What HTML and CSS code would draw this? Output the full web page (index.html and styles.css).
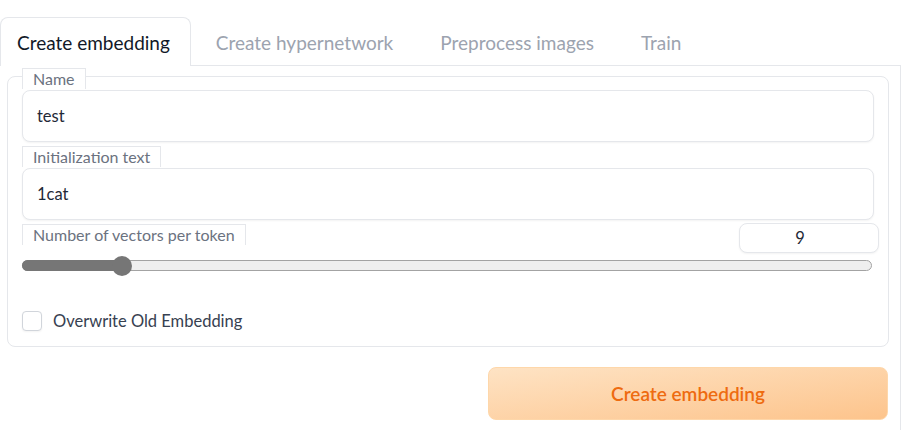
FILE: index.html
```html
<!DOCTYPE html>
<html lang="en">
<head>
<meta charset="utf-8">
<title>Create embedding</title>
<link rel="stylesheet" href="styles.css">
</head>
<body>
<div class="tabs">
  <nav class="tab-nav">
    <button class="tab active">Create embedding</button>
    <button class="tab">Create hypernetwork</button>
    <button class="tab">Preprocess images</button>
    <button class="tab">Train</button>
  </nav>
  <div class="tab-panel">
    <div class="block">
      <label class="field first">
        <span class="field-label">Name</span>
        <input class="text-input" type="text" value="test">
      </label>
      <label class="field">
        <span class="field-label">Initialization text</span>
        <input class="text-input" type="text" value="1cat">
      </label>
      <div class="slider-field">
        <div class="slider-head">
          <span class="field-label">Number of vectors per token</span>
          <input class="num-input" type="text" value="9">
        </div>
        <div class="slider-track">
          <div class="slider-fill" style="width: 100px"></div>
          <span class="slider-thumb"></span>
        </div>
      </div>
      <label class="check-row">
        <span class="checkbox"></span>
        <span class="check-label">Overwrite Old Embedding</span>
      </label>
    </div>
    <div class="actions">
      <button class="primary-btn">Create embedding</button>
    </div>
  </div>
</div>
</body>
</html>
```

FILE: styles.css
```css
* { box-sizing: border-box; }

body {
  margin: 0;
  background: #fff;
  font-family: Lato, "Source Sans Pro", sans-serif;
  color: #1f2937;
}

.tabs {
  width: 901px;
}

.tab-nav {
  display: flex;
  gap: 3px;
  padding-top: 17px;
  border-bottom: 1px solid #e5e7eb;
}

.tab {
  font: inherit;
  font-size: 19px;
  height: 49px;
  margin-bottom: -1px;
  padding: 0 21px;
  border: 1px solid transparent;
  border-bottom: none;
  border-radius: 8px 8px 0 0;
  background: none;
  color: #9ca3af;
  cursor: pointer;
}

.tab.active {
  padding: 0 20px 0 16px;
  border-color: #e5e7eb;
  background: #fff;
  color: #111827;
}

.tab-panel {
  min-height: 365px;
  padding: 10px 11px 10px 7px;
  border-right: 1px solid #e5e7eb;
}

.block {
  display: flex;
  flex-direction: column;
  padding: 0 14px 15px;
  border: 1px solid #e5e7eb;
  border-radius: 8px;
}

.field {
  display: flex;
  flex-direction: column;
  align-items: flex-start;
  gap: 1px;
  margin-bottom: 4px;
}

.field.first {
  margin-top: -9px;
}

.field-label {
  display: inline-block;
  height: 21px;
  padding: 0 10px;
  border: 1px solid #e5e7eb;
  border-bottom: none;
  background: #fff;
  font-size: 16px;
  line-height: 20px;
  color: #6b7280;
}

.text-input {
  width: 100%;
  height: 52px;
  padding: 0 14px;
  border: 1px solid #e5e7eb;
  border-radius: 8px;
  box-shadow: 0 1px 2px rgba(0, 0, 0, 0.05);
  font: inherit;
  font-size: 16.5px;
  color: #1f2937;
  outline: none;
}

.slider-field {
  display: flex;
  flex-direction: column;
}

.slider-head {
  display: flex;
  justify-content: space-between;
  align-items: flex-start;
}

.num-input {
  width: 140px;
  height: 30px;
  margin-top: -1px;
  margin-right: -5px;
  padding: 0 18px 0 0;
  border: 1px solid #e5e7eb;
  border-radius: 8px;
  box-shadow: 0 1px 2px rgba(0, 0, 0, 0.05);
  font: inherit;
  font-size: 16.5px;
  text-align: center;
  color: #1f2937;
  outline: none;
}

.slider-track {
  display: flex;
  align-items: center;
  width: 850px;
  height: 11px;
  margin-top: 7px;
  border: 1px solid #a3a3a3;
  border-radius: 6px;
  background: #efefef;
}

.slider-fill {
  height: 11px;
  margin-left: -1px;
  border-radius: 6px 0 0 6px;
  background: #767676;
}

.slider-thumb {
  width: 20px;
  height: 20px;
  margin-left: -10px;
  flex: none;
  border-radius: 50%;
  background: #767676;
}

.check-row {
  display: flex;
  align-items: center;
  gap: 11px;
  margin-top: 40px;
}

.checkbox {
  width: 20px;
  height: 20px;
  border: 1px solid #d1d5db;
  border-radius: 4px;
  background: #fff;
  box-shadow: 0 1px 2px rgba(0, 0, 0, 0.05);
}

.check-label {
  font-size: 16.5px;
  color: #374151;
}

.actions {
  display: flex;
  justify-content: flex-end;
  margin-top: 20px;
  padding-right: 1px;
}

.primary-btn {
  width: 400px;
  height: 53px;
  border: 1px solid #fed7aa;
  border-radius: 8px;
  background: linear-gradient(to bottom right, #fee3c4, #fdc48c);
  font: inherit;
  font-size: 19px;
  font-weight: 600;
  color: #ee6b10;
  cursor: pointer;
}
```
